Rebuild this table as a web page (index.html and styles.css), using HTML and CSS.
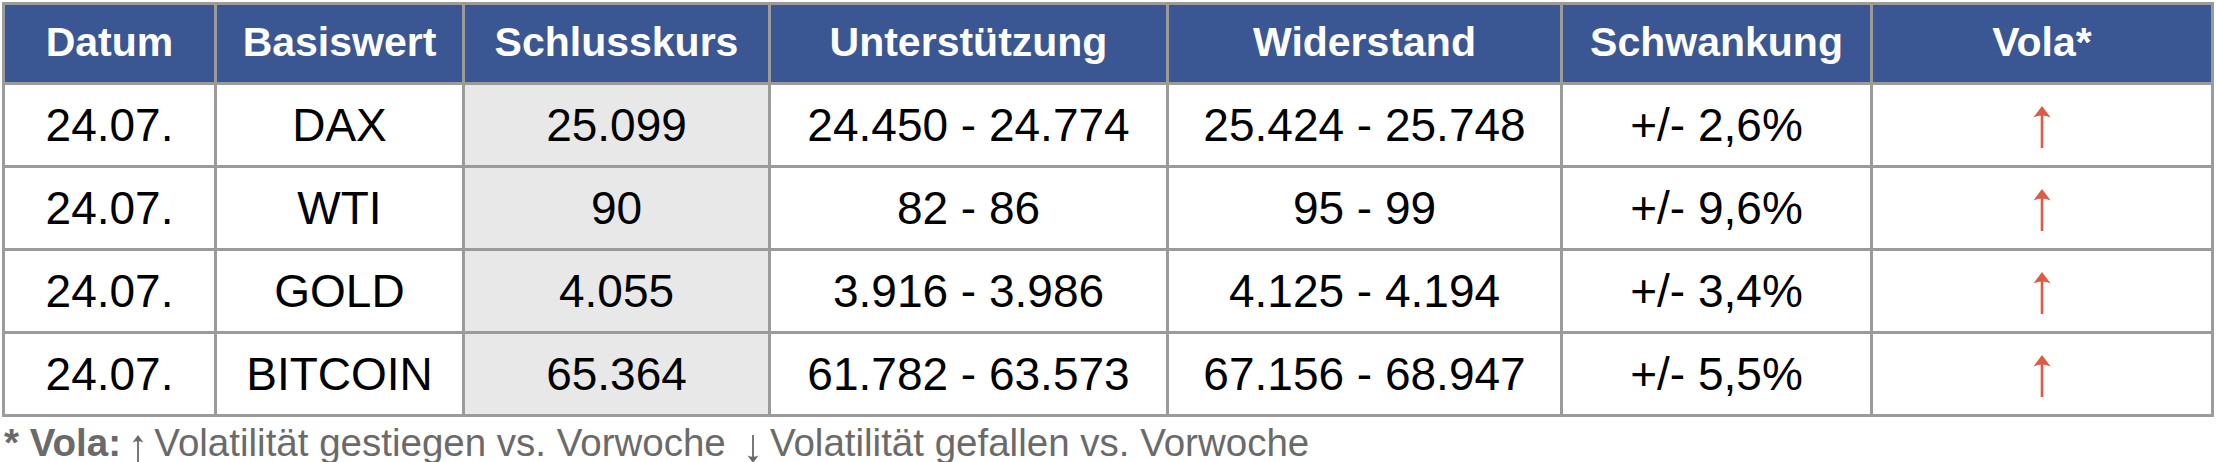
FILE: index.html
```html
<!DOCTYPE html>
<html lang="de">
<head>
<meta charset="utf-8">
<title>Wochenausblick</title>
<link rel="stylesheet" href="styles.css">
</head>
<body>
<table class="levels">
  <colgroup>
    <col class="c-datum">
    <col class="c-basis">
    <col class="c-kurs">
    <col class="c-unter">
    <col class="c-wider">
    <col class="c-schw">
    <col class="c-vola">
  </colgroup>
  <thead>
    <tr>
      <th>Datum</th>
      <th>Basiswert</th>
      <th>Schlusskurs</th>
      <th>Unterstützung</th>
      <th>Widerstand</th>
      <th>Schwankung</th>
      <th>Vola*</th>
    </tr>
  </thead>
  <tbody>
    <tr>
      <td>24.07.</td>
      <td>DAX</td>
      <td class="kurs">25.099</td>
      <td>24.450 - 24.774</td>
      <td>25.424 - 25.748</td>
      <td>+/- 2,6%</td>
      <td class="up"><svg class="arrow-big" viewBox="0 0 18 42" role="img" aria-label="gestiegen"><path d="M7.7 9h2.6v33H7.7z"/><path d="M9 0L17.6 11.5Q9 7.5 0.4 11.5Z"/></svg></td>
    </tr>
    <tr>
      <td>24.07.</td>
      <td>WTI</td>
      <td class="kurs">90</td>
      <td>82 - 86</td>
      <td>95 - 99</td>
      <td>+/- 9,6%</td>
      <td class="up"><svg class="arrow-big" viewBox="0 0 18 42" role="img" aria-label="gestiegen"><path d="M7.7 9h2.6v33H7.7z"/><path d="M9 0L17.6 11.5Q9 7.5 0.4 11.5Z"/></svg></td>
    </tr>
    <tr>
      <td>24.07.</td>
      <td>GOLD</td>
      <td class="kurs">4.055</td>
      <td>3.916 - 3.986</td>
      <td>4.125 - 4.194</td>
      <td>+/- 3,4%</td>
      <td class="up"><svg class="arrow-big" viewBox="0 0 18 42" role="img" aria-label="gestiegen"><path d="M7.7 9h2.6v33H7.7z"/><path d="M9 0L17.6 11.5Q9 7.5 0.4 11.5Z"/></svg></td>
    </tr>
    <tr>
      <td>24.07.</td>
      <td>BITCOIN</td>
      <td class="kurs">65.364</td>
      <td>61.782 - 63.573</td>
      <td>67.156 - 68.947</td>
      <td>+/- 5,5%</td>
      <td class="up"><svg class="arrow-big" viewBox="0 0 18 42" role="img" aria-label="gestiegen"><path d="M7.7 9h2.6v33H7.7z"/><path d="M9 0L17.6 11.5Q9 7.5 0.4 11.5Z"/></svg></td>
    </tr>
  </tbody>
</table>
<p class="note"><b>* Vola:</b> <svg class="arrow-small" viewBox="0 0 12 28" role="img" aria-label="↑"><path d="M5.1 5h1.8v23H5.1z"/><path d="M6 0L11.5 7.5Q6 5 0.5 7.5Z"/></svg> Volatilität gestiegen vs. Vorwoche &nbsp;<svg class="arrow-small" viewBox="0 0 12 28" role="img" aria-label="↓"><path d="M5.1 0h1.8v23H5.1z"/><path d="M6 28L11.5 20.5Q6 23 0.5 20.5Z"/></svg> Volatilität gefallen vs. Vorwoche</p>
</body>
</html>
```
FILE: styles.css
```css
html, body {
  background: #ffffff;
}
body {
  margin: 2px 0 0 2px;
  font-family: "Liberation Sans", Arial, sans-serif;
  color: #000000;
}
.levels {
  border-collapse: collapse;
  table-layout: fixed;
  width: 2211px;
}
.c-datum { width: 212px; }
.c-basis { width: 248px; }
.c-kurs  { width: 306px; }
.c-unter { width: 398px; }
.c-wider { width: 394px; }
.c-schw  { width: 310px; }
.c-vola  { width: 341px; }
.levels th,
.levels td {
  border: 3px solid #9b9b9b;
  text-align: center;
  vertical-align: middle;
  padding: 0;
  white-space: nowrap;
}
.levels th {
  background: #3a5693;
  color: #ffffff;
  font-weight: bold;
  font-size: 41px;
  height: 74px;
  padding-bottom: 3px;
}
.levels td {
  font-size: 46px;
  height: 80px;
}
.levels td.kurs {
  background: #e8e8e8;
}
.levels td.up {
  line-height: 0;
}
.arrow-big {
  width: 18px;
  height: 42px;
  fill: #dd5a46;
  display: block;
  margin: 4px auto 0;
}
.note {
  margin: 4px 0 0 2px;
  font-size: 38.5px;
  line-height: 44px;
  color: #6a6a6a;
  white-space: nowrap;
}
.note b {
  font-weight: bold;
}
.arrow-small {
  width: 12px;
  height: 28px;
  fill: #6a6a6a;
  vertical-align: -7px;
}
```
